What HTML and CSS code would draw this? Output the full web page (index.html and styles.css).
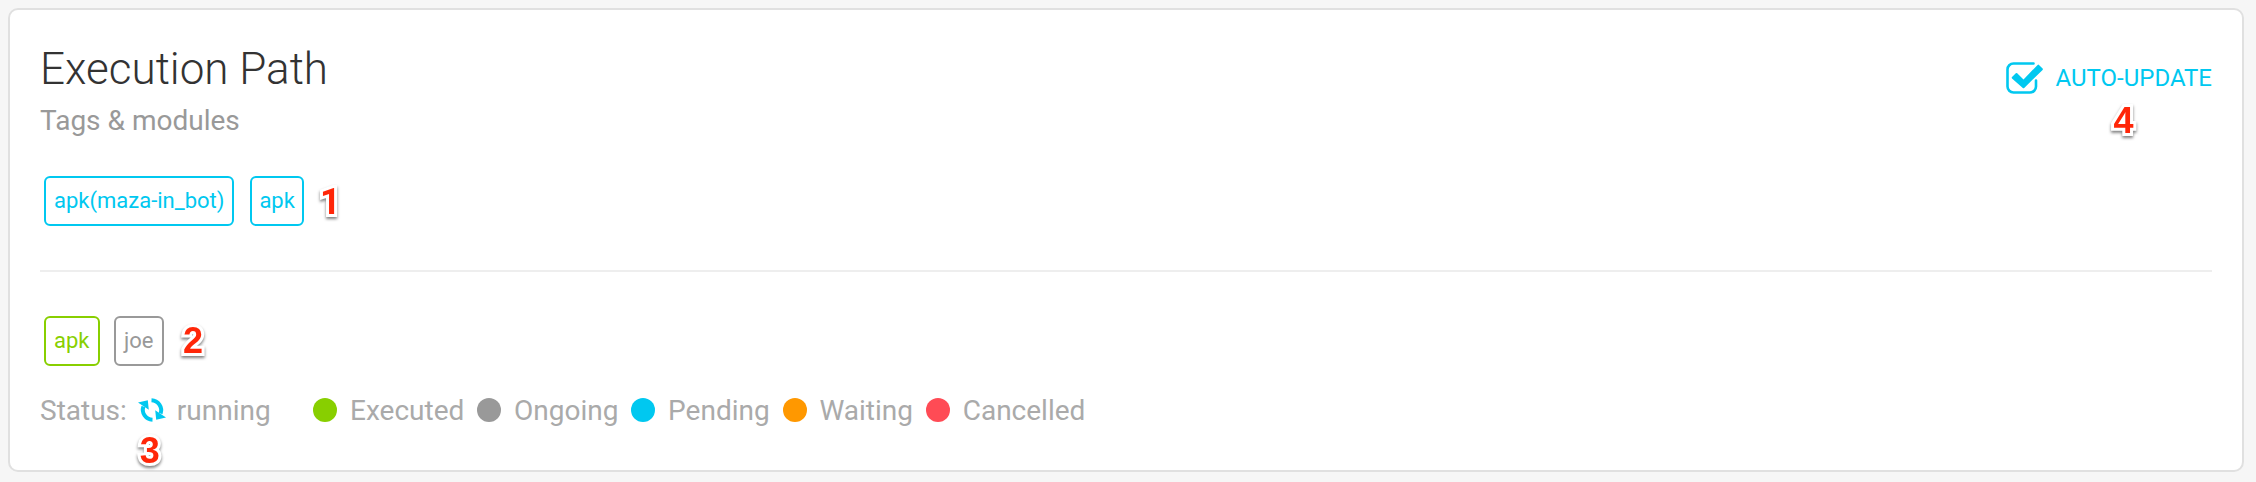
FILE: index.html
```html
<!DOCTYPE html>
<html lang="en">
<head>
<meta charset="utf-8">
<title>Execution Path</title>
<link rel="stylesheet" href="styles.css">
</head>
<body>
<main class="card">
  <header class="card-header">
    <div class="headings">
      <h1 class="title">Execution Path</h1>
      <p class="subtitle">Tags &amp; modules</p>
    </div>
    <div class="auto-update">
      <svg class="check-icon" viewBox="0 0 38 32" width="38" height="32">
        <path d="M27.500 1.500H7.500a6 6 0 0 0-6 6v17a6 6 0 0 0 6 6h16.500a6 6 0 0 0 6-6V18.500" fill="none" stroke="currentColor" stroke-width="2.600" stroke-linecap="round"/>
        <path d="M6 15l3.800-3.800q.7-.6 1.400 0l6.300 6.200L31.600 2.900q.7-.6 1.400 0l3.600 3.600q.6.700 0 1.400L18.200 26q-.7.600-1.400 0L6 16.400q-.6-.7 0-1.400z" fill="currentColor"/>
      </svg>
      <span class="auto-label">AUTO-UPDATE</span>
      <span class="marker marker-4">4</span>
    </div>
  </header>
  <section class="tags">
    <span class="tag">apk(maza-in_bot)</span>
    <span class="tag tag-short">apk</span>
    <span class="marker marker-1">1</span>
  </section>
  <hr class="divider">
  <section class="modules">
    <span class="tag tag-green">apk</span>
    <span class="tag tag-gray">joe</span>
    <span class="marker marker-2">2</span>
  </section>
  <footer class="status">
    <span class="status-label">Status:</span>
    <span class="status-icon">
      <svg class="sync-icon" viewBox="0 0 28 24" width="28" height="24">
        <path d="M13.500 2.200A10 10 0 0 1 22.600 15.500M14.500 21.800A10 10 0 0 1 5.400 8.500" fill="none" stroke="currentColor" stroke-width="4"/>
        <path d="M0 4.500L9.800 2.200 10.800 11.800zM28 19.500L18.200 21.800 17.200 12.200z" fill="currentColor"/>
      </svg>
      <span class="marker marker-3">3</span>
    </span>
    <span class="status-value">running</span>
    <ul class="legend">
      <li class="item"><i class="dot dot-green"></i>Executed</li>
      <li class="item"><i class="dot dot-gray"></i>Ongoing</li>
      <li class="item"><i class="dot dot-blue"></i>Pending</li>
      <li class="item"><i class="dot dot-orange"></i>Waiting</li>
      <li class="item"><i class="dot dot-red"></i>Cancelled</li>
    </ul>
  </footer>
</main>
</body>
</html>
```
FILE: styles.css
```css
* { box-sizing: border-box; }

body {
  margin: 0;
  padding: 8px 12px 10px 8px;
  height: 482px;
  background: #f6f6f6;
  font-family: Roboto, "Liberation Sans", sans-serif;
}

.card {
  height: 464px;
  padding: 33px 30px 0;
  background: #fff;
  border: 2px solid #e0e0e0;
  border-radius: 10px;
}

.card-header {
  display: flex;
  justify-content: space-between;
  height: 133px;
}

.title {
  margin: 0;
  font-size: 44px;
  font-weight: 300;
  line-height: 52px;
  color: #333;
}

.subtitle {
  margin: 9px 0 0;
  font-size: 28px;
  line-height: 34px;
  color: #999;
}

.auto-update {
  position: relative;
  display: flex;
  align-items: center;
  gap: 12px;
  height: 32px;
  margin-top: 19px;
  color: #00c8f0;
  font-size: 24px;
}

.check-icon, .sync-icon { display: block; flex: none; }

.tags, .modules {
  position: relative;
  display: flex;
  height: 50px;
  padding-left: 4px;
}

.tags { gap: 16px; }
.modules { gap: 14px; }

.tag {
  height: 50px;
  padding: 0 8px;
  border: 2px solid #00c8f0;
  border-radius: 6px;
  color: #00c8f0;
  font-size: 22px;
  line-height: 46px;
}

.tag-short { padding: 0 7px; }
.tag-green { width: 56px; border-color: #88cf00; color: #88cf00; }
.tag-gray { width: 50px; border-color: #999; color: #999; }

.divider {
  height: 2px;
  margin: 44px 0;
  border: 0;
  background: #eee;
}

.status {
  display: flex;
  align-items: center;
  height: 34px;
  margin-top: 27px;
  font-size: 28px;
  line-height: 34px;
  color: #aaa;
}

.status-label, .status-value, .item { padding-top: 1px; }

.status-icon {
  position: relative;
  margin: 0 11px 0 11px;
  color: #00c8f0;
}

.legend {
  display: flex;
  gap: 12.850px;
  margin: 0 0 0 42.500px;
  padding: 0;
  list-style: none;
}

.item { display: flex; align-items: center; gap: 12.850px; }

.dot { width: 24px; height: 24px; margin-bottom: 2px; border-radius: 50%; }
.dot-green { background: #88cf00; }
.dot-gray { background: #999; }
.dot-blue { background: #00c8f0; }
.dot-orange { background: #ff9800; }
.dot-red { background: #ff4b55; }

/* Numbered callouts sit over the card content. */
.marker {
  position: absolute;
  color: #ff2608;
  font: bold 36px/40px "Liberation Sans", Arial, sans-serif;
  -webkit-text-stroke: 6px #fff;
  paint-order: stroke fill;
  stroke-linejoin: round;
  filter: drop-shadow(0 2px 1.500px rgba(0, 0, 0, .5));
}

.marker-1 { left: 280px; top: 6px; font-family: Roboto, sans-serif; }
.marker-2 { left: 143px; top: 5px; }
.marker-3 { left: 2px; top: 33px; }
.marker-4 { left: 108px; top: 39px; }
```
